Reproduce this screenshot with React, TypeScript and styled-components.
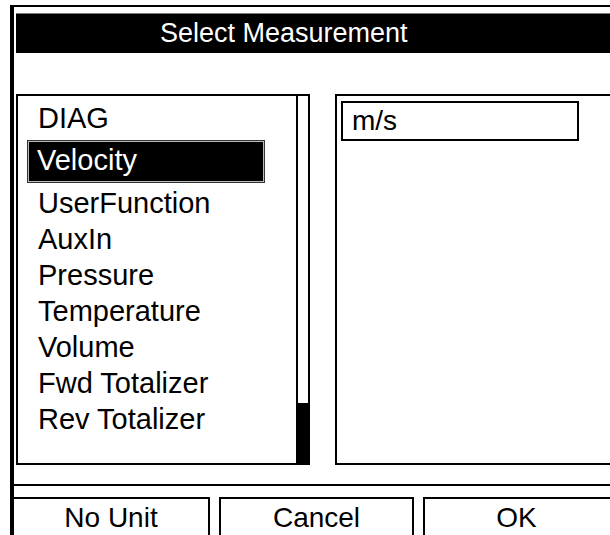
import React from "react";
import styled, { createGlobalStyle } from "styled-components";

const GlobalStyle = createGlobalStyle`
  html, body {
    margin: 0;
    padding: 0;
    background: #ffffff;
    overflow: hidden;
  }
  body {
    font-family: "Liberation Sans", Arial, sans-serif;
    color: #000;
  }
`;

const Frame = styled.div`
  margin: 5px 0 0 10px;
  width: 600px;
  height: 530px;
  border-left: 4px solid #000;
  border-top: 2px solid #000;
  padding-top: 6px;
  display: flex;
  flex-direction: column;
  box-sizing: border-box;
  overflow: hidden;
`;

const TitleBar = styled.div`
  margin-left: 2px;
  height: 40px;
  flex: none;
  background: #000;
  border-top: 1px solid #777;
  box-sizing: border-box;
  color: #fff;
  font-size: 27px;
  line-height: 39px;
  padding-left: 144px;
  white-space: nowrap;
`;

const Body = styled.div`
  margin-top: 41px;
  margin-left: 2px;
  display: flex;
  align-items: stretch;
  height: 371px;
  flex: none;
`;

const ListBox = styled.div`
  width: 294px;
  border: 2px solid #000;
  box-sizing: border-box;
  display: flex;
`;

const ListItems = styled.div`
  flex: 1;
  padding-top: 4px;
  display: flex;
  flex-direction: column;
`;

const Item = styled.div<{ $selected?: boolean }>`
  height: ${(p) => (p.$selected ? "43px" : "36px")};
  line-height: ${(p) => (p.$selected ? "39px" : "36px")};
  font-size: 29px;
  white-space: nowrap;
  box-sizing: border-box;
  padding-left: ${(p) => (p.$selected ? "9px" : "20px")};
  margin: ${(p) => (p.$selected ? "4px 0 2px 9px" : "0")};
  width: ${(p) => (p.$selected ? "238px" : "auto")};
  background: ${(p) => (p.$selected ? "#000" : "transparent")};
  color: ${(p) => (p.$selected ? "#fff" : "#000")};
  border: ${(p) => (p.$selected ? "1px solid #333" : "none")};
  box-shadow: ${(p) => (p.$selected ? "inset 0 0 0 1px #bbb" : "none")};
`;

const ScrollTrack = styled.div`
  width: 10px;
  border-left: 2px solid #000;
  display: flex;
  flex-direction: column;
  justify-content: flex-end;
`;

const ScrollThumb = styled.div`
  height: 62px;
  margin-bottom: -2px;
  background: #000;
`;

const RightPanel = styled.div`
  margin-left: 25px;
  flex: 1;
  border: 2px solid #000;
  border-right: none;
  box-sizing: border-box;
  padding: 5px 0 0 4px;
`;

const UnitBox = styled.div`
  width: 238px;
  height: 40px;
  border: 2px solid #000;
  box-sizing: border-box;
  font-size: 28px;
  line-height: 36px;
  padding-left: 9px;
`;

const Separator = styled.div`
  margin-top: 19px;
  margin-left: -5px;
  height: 2px;
  flex: none;
  background: #000;
`;

const ButtonRow = styled.div`
  margin-top: 11px;
  margin-left: -2px;
  flex: 1;
  display: grid;
  grid-template-columns: 198px 195px 1fr;
  column-gap: 9px;
`;

const Button = styled.div<{ $open?: boolean }>`
  border: 2px solid #000;
  border-bottom: none;
  border-right: ${(p) => (p.$open ? "none" : "2px solid #000")};
  box-sizing: border-box;
  text-align: center;
  font-size: 28px;
  line-height: 30px;
  padding-top: 4px;
  padding-right: ${(p) => (p.$open ? "2px" : "0")};
`;

const items = [
  "DIAG",
  "Velocity",
  "UserFunction",
  "AuxIn",
  "Pressure",
  "Temperature",
  "Volume",
  "Fwd Totalizer",
  "Rev Totalizer",
];

export default function App() {
  return (
    <>
      <GlobalStyle />
      <Frame>
        <TitleBar>Select Measurement</TitleBar>
        <Body>
          <ListBox>
            <ListItems>
              {items.map((it) => (
                <Item key={it} $selected={it === "Velocity"}>
                  {it}
                </Item>
              ))}
            </ListItems>
            <ScrollTrack>
              <ScrollThumb />
            </ScrollTrack>
          </ListBox>
          <RightPanel>
            <UnitBox>m/s</UnitBox>
          </RightPanel>
        </Body>
        <Separator />
        <ButtonRow>
          <Button>No Unit</Button>
          <Button>Cancel</Button>
          <Button $open>OK</Button>
        </ButtonRow>
      </Frame>
    </>
  );
}
